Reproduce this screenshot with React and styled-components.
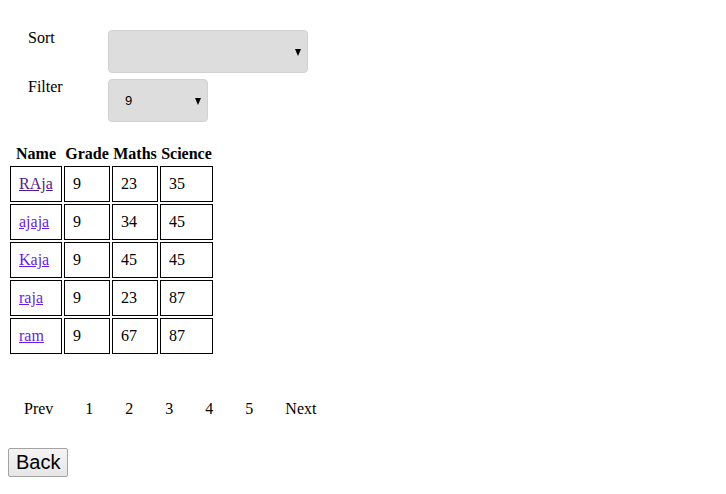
import React from 'react';
import styled, { createGlobalStyle } from 'styled-components';

const GlobalStyle = createGlobalStyle`
  body {
    margin: 8px;
    font-family: "Liberation Serif", "Times New Roman", serif;
    font-size: 16px;
    color: #000;
    background: #fff;
  }
`;

const Controls = styled.div`
  padding-top: 22px;
  display: flex;
  flex-direction: column;
  gap: 6px;
`;

const Row = styled.div`
  display: flex;
  align-items: flex-start;
`;

const Label = styled.label`
  width: 80px;
  padding-left: 20px;
  line-height: 18px;
  margin-top: -1px;
`;

const SelectWrap = styled.div`
  position: relative;
  &::after {
    content: '';
    position: absolute;
    right: 7px;
    top: 19px;
    border-left: 3.5px solid transparent;
    border-right: 3.5px solid transparent;
    border-top: 7px solid #000;
    pointer-events: none;
  }
`;

const Select = styled.select`
  appearance: none;
  display: block;
  width: ${(p) => p.w}px;
  height: 43px;
  background: #dddddd;
  border: 1px solid #d2d2d2;
  border-radius: 4px;
  font-family: "Liberation Sans", Arial, sans-serif;
  font-size: 13px;
  padding: 0 20px 0 16px;
  color: #000;
  outline: none;
`;

const Table = styled.table`
  margin-top: 20px;
  border-spacing: 2px;
`;

const Th = styled.th`
  padding: 1px;
  width: ${(p) => p.w}px;
  font-weight: bold;
  line-height: 18px;
  white-space: nowrap;
`;

const Td = styled.td`
  border: 1px solid #000;
  padding: 8px;
  line-height: 18px;
  text-align: left;
`;

const NameLink = styled.a`
  color: ${(p) => (p.visited ? '#551a8b' : '#6a1be8')};
  text-decoration: underline;
`;

const Pager = styled.div`
  margin-top: 44px;
  line-height: 18px;
`;

const PageItem = styled.span`
  padding: 0 16px;
`;

const BackButton = styled.button`
  margin-top: 30px;
  display: block;
  font-family: "Liberation Sans", Arial, sans-serif;
  font-size: 20px;
  line-height: 23px;
  padding: 2px 7px;
  background: linear-gradient(#f4f4f4, #e6e6e6);
  border: 1px solid #a3a3a3;
  border-radius: 2px;
  color: #000;
`;

const rows = [
  { name: 'RAja', grade: 9, maths: 23, science: 35, visited: true },
  { name: 'ajaja', grade: 9, maths: 34, science: 45 },
  { name: 'Kaja', grade: 9, maths: 45, science: 45 },
  { name: 'raja', grade: 9, maths: 23, science: 87 },
  { name: 'ram', grade: 9, maths: 67, science: 87 },
];

export default function App() {
  return (
    <>
      <GlobalStyle />
      <Controls>
        <Row>
          <Label>Sort</Label>
          <SelectWrap>
            <Select w={200} defaultValue="">
              <option value=""></option>
              <option value="name">Name</option>
            </Select>
          </SelectWrap>
        </Row>
        <Row>
          <Label>Filter</Label>
          <SelectWrap>
            <Select w={100} defaultValue="9">
              <option value="9">9</option>
              <option value="10">10</option>
            </Select>
          </SelectWrap>
        </Row>
      </Controls>
      <Table>
        <thead>
          <tr>
            <Th w={50}>Name</Th>
            <Th w={44}>Grade</Th>
            <Th w={44}>Maths</Th>
            <Th w={51}>Science</Th>
          </tr>
        </thead>
        <tbody>
          {rows.map((r) => (
            <tr key={r.name}>
              <Td>
                <NameLink href="#" visited={r.visited ? 1 : 0}>{r.name}</NameLink>
              </Td>
              <Td>{r.grade}</Td>
              <Td>{r.maths}</Td>
              <Td>{r.science}</Td>
            </tr>
          ))}
        </tbody>
      </Table>
      <Pager>
        <PageItem>Prev</PageItem>
        <PageItem>1</PageItem>
        <PageItem>2</PageItem>
        <PageItem>3</PageItem>
        <PageItem>4</PageItem>
        <PageItem>5</PageItem>
        <PageItem>Next</PageItem>
      </Pager>
      <BackButton>Back</BackButton>
    </>
  );
}
